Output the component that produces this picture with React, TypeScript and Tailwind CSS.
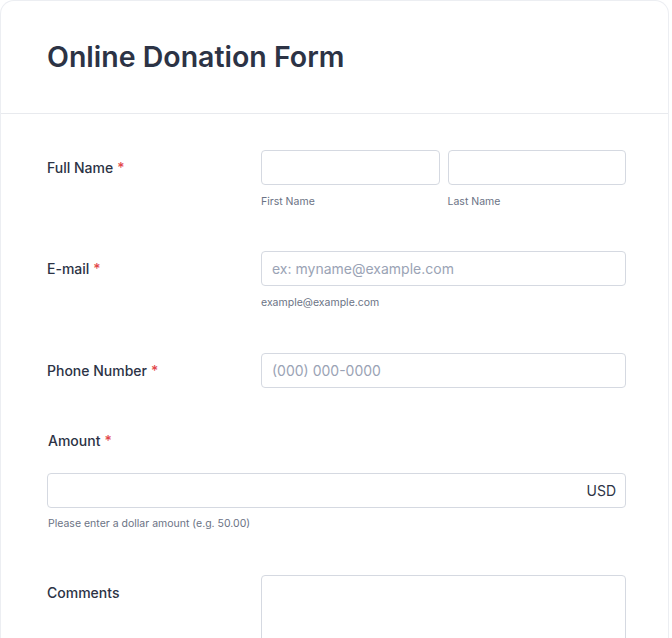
import React from "react";

const font = { fontFamily: "Inter, 'Noto Sans', sans-serif" };

function Req() {
  return <span className="ml-1 text-[#e2474b]">*</span>;
}

function Label({ children, required }: { children: React.ReactNode; required?: boolean }) {
  return (
    <div className="flex h-[35px] w-[214px] shrink-0 items-center text-[14px] font-medium text-[#2c3345]">
      {children}
      {required && <Req />}
    </div>
  );
}

function Field({ placeholder }: { placeholder?: string }) {
  return (
    <input
      type="text"
      placeholder={placeholder}
      className="h-[35px] w-full rounded-[4px] border border-[#d5d9e1] bg-white px-[10px] text-[14px] text-[#2c3345] outline-none placeholder:text-[#9aa3b5]"
    />
  );
}

function Sub({ children }: { children: React.ReactNode }) {
  return <div className="mt-[9px] text-[10.5px] leading-[16px] text-[#6b7385]">{children}</div>;
}

export default function App() {
  return (
    <div className="h-screen overflow-hidden bg-white" style={font}>
      <div className="mr-[3px] rounded-t-[14px] border border-b-0 border-[#eceef2] bg-white">
        <div className="flex h-[113px] items-center border-b border-[#e8eaee] pl-[46px] pr-[42px]">
          <h1 className="text-[28.5px] font-semibold text-[#2c3345]">Online Donation Form</h1>
        </div>

        <div className="flex flex-col pl-[46px] pr-[42px] pt-[36px]">
          {/* Full name */}
          <div className="flex">
            <Label required>Full Name</Label>
            <div className="flex flex-1 gap-[8px]">
              <div className="flex-1">
                <Field />
                <Sub>First Name</Sub>
              </div>
              <div className="flex-1">
                <Field />
                <Sub>Last Name</Sub>
              </div>
            </div>
          </div>

          {/* Email */}
          <div className="mt-[41px] flex">
            <Label required>E-mail</Label>
            <div className="flex-1">
              <Field placeholder="ex: myname@example.com" />
              <Sub>example@example.com</Sub>
            </div>
          </div>

          {/* Phone */}
          <div className="mt-[42px] flex">
            <Label required>Phone Number</Label>
            <div className="flex-1">
              <Field placeholder="(000) 000-0000" />
            </div>
          </div>

          {/* Amount */}
          <div className="mt-[43px] pl-[1px] text-[14px] font-medium leading-[20px] text-[#2c3345]">
            Amount
            <Req />
          </div>
          <div className="mt-[22px] flex h-[35px] items-center justify-end rounded-[4px] border border-[#d5d9e1] px-[9px] text-[14px] text-[#2c3345]">
            USD
          </div>
          <div className="mt-[8px] pl-[1px] text-[10.5px] leading-[16px] text-[#6b7385]">
            Please enter a dollar amount (e.g. 50.00)
          </div>

          {/* Comments */}
          <div className="mt-[43px] flex">
            <Label>Comments</Label>
            <div className="flex-1">
              <textarea className="h-[120px] w-full resize-none rounded-[4px] border border-[#d5d9e1] bg-white outline-none" />
            </div>
          </div>
        </div>
      </div>
    </div>
  );
}
